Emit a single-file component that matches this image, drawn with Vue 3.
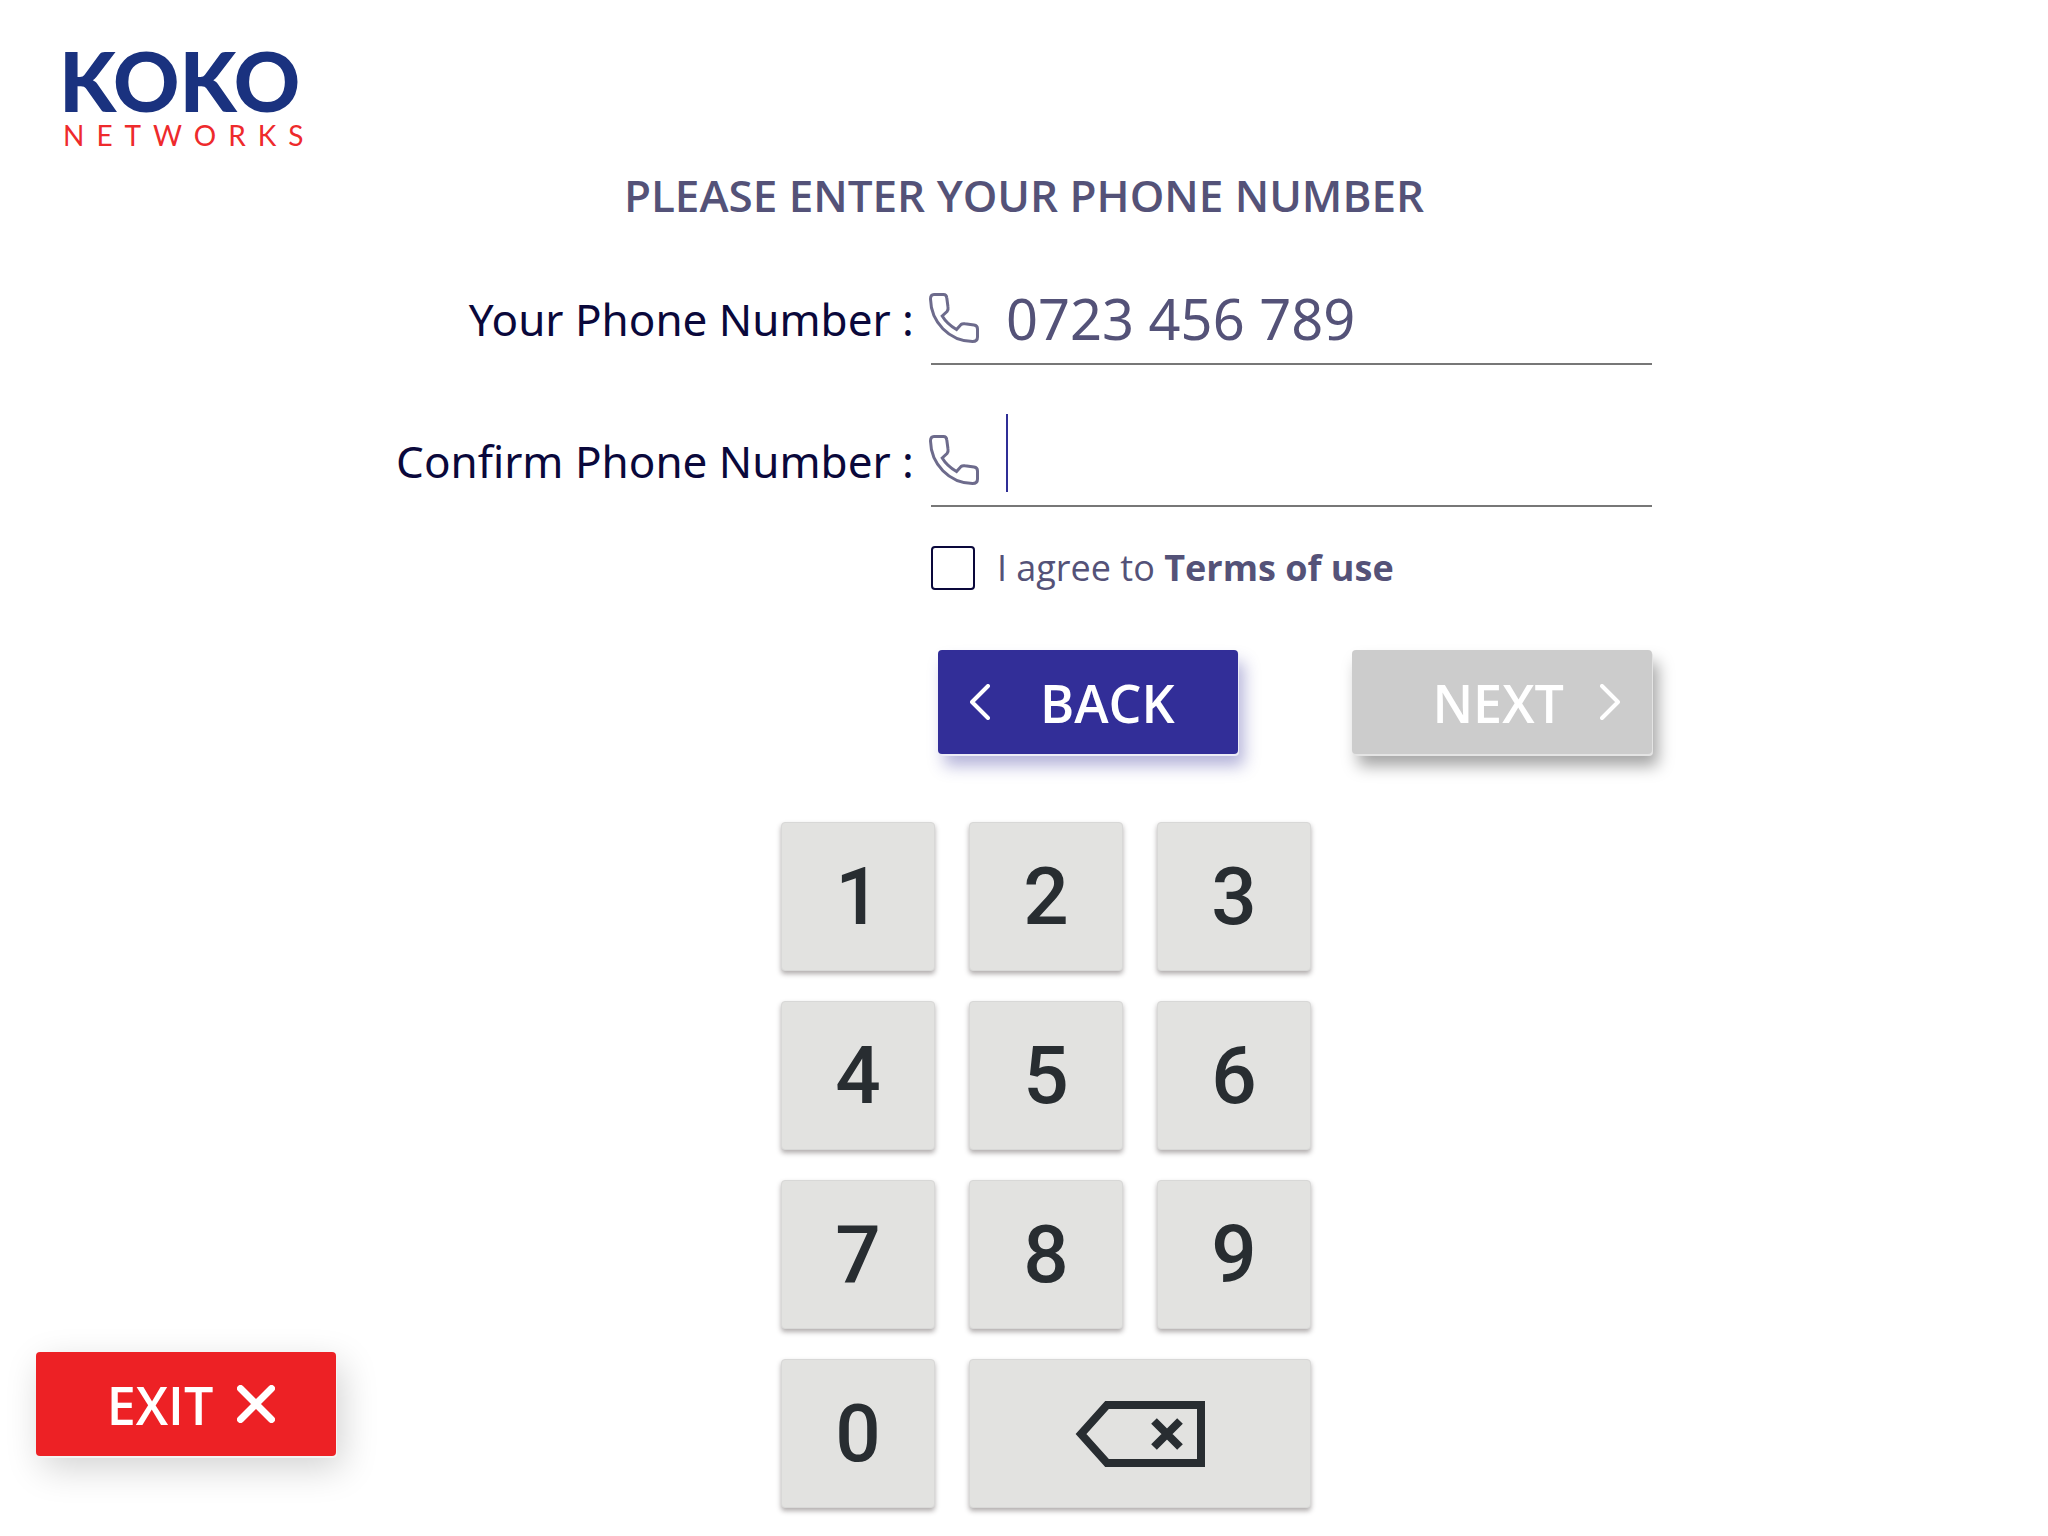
<script setup>
import { ref } from 'vue'

const phone = ref('0723 456 789')
const confirmPhone = ref('')
const agreed = ref(false)
const digits = ['1', '2', '3', '4', '5', '6', '7', '8', '9', '0']

function press(digit) {
  confirmPhone.value += digit
}

function erase() {
  confirmPhone.value = confirmPhone.value.slice(0, -1)
}
</script>

<template>
  <div class="page">
    <header class="brand">
      <span class="brand-name">KOKO</span>
      <span class="brand-sub">NETWORKS</span>
    </header>

    <main class="content">
      <h1 class="title">PLEASE ENTER YOUR PHONE NUMBER</h1>

      <form class="form" @submit.prevent>
        <label class="label" for="phone">Your Phone Number :</label>
        <div class="field">
          <svg class="phone-icon" viewBox="0 0 50 50" aria-hidden="true">
            <path d="M5 1.5H14.5Q17.500 1.500 17.800 5L19 14Q19.500 16.500 18 18.500L13.200 23Q18 31 27.500 36.500L32 31.500Q33.500 30.300 36 30.800L45 32Q48.500 32.500 48.500 36V44Q48.500 48.500 43.500 48.500C20 48 2 29 1.500 6Q1.500 1.500 5 1.500Z" />
          </svg>
          <input id="phone" v-model="phone" class="input" type="tel" />
        </div>

        <label class="label" for="confirm">Confirm Phone Number :</label>
        <div class="field">
          <svg class="phone-icon" viewBox="0 0 50 50" aria-hidden="true">
            <path d="M5 1.5H14.5Q17.500 1.500 17.800 5L19 14Q19.500 16.500 18 18.500L13.200 23Q18 31 27.500 36.500L32 31.500Q33.500 30.300 36 30.800L45 32Q48.500 32.500 48.500 36V44Q48.500 48.500 43.500 48.500C20 48 2 29 1.500 6Q1.500 1.500 5 1.500Z" />
          </svg>
          <input id="confirm" v-model="confirmPhone" class="input" type="tel" />
          <span v-if="!confirmPhone" class="caret"></span>
        </div>

        <div class="agree">
          <input id="agree" v-model="agreed" class="check" type="checkbox" />
          <label for="agree">I agree to <a class="terms" href="#terms">Terms of use</a></label>
        </div>

        <div class="actions">
          <button class="btn back" type="button">
            <svg class="chevron" viewBox="0 0 20 36" aria-hidden="true"><path d="M18 2L2 18L18 34" /></svg>
            <span>BACK</span>
          </button>
          <button class="btn next" type="submit" :disabled="!agreed">
            <span>NEXT</span>
            <svg class="chevron" viewBox="0 0 20 36" aria-hidden="true"><path d="M2 2L18 18L2 34" /></svg>
          </button>
        </div>
      </form>
    </main>

    <section class="bottom">
      <button class="btn exit" type="button">
        <span>EXIT</span>
        <svg class="cross" viewBox="0 0 38 38" aria-hidden="true"><path d="M3.5 3.5L34.5 34.5M34.5 3.5L3.5 34.5" /></svg>
      </button>
      <div class="keypad">
        <button v-for="digit in digits" :key="digit" class="key" type="button" @click="press(digit)">{{ digit }}</button>
        <button class="key wide" type="button" aria-label="Backspace" @click="erase">
          <svg class="erase" viewBox="0 0 130 68" aria-hidden="true">
            <path d="M32 5H126V63H32L6 34Z" />
            <path d="M79 21L105 47M105 21L79 47" />
          </svg>
        </button>
      </div>
    </section>
  </div>
</template>

<style>
body {
  background: #fff;
}
</style>

<style scoped>
.page {
  display: flex;
  flex-direction: column;
  min-height: 100vh;
  box-sizing: border-box;
  padding: 46px 0 28px;
  font-family: "Open Sans", sans-serif;
}

.brand {
  display: flex;
  flex-direction: column;
  align-self: flex-start;
  margin-left: 59px;
  font-family: Lato, sans-serif;
}

.brand-name {
  color: #1a327f;
  font-size: 82px;
  font-weight: 900;
  line-height: 68px;
}

.brand-sub {
  padding-left: 4px;
  color: #ee2a2c;
  font-size: 28px;
  letter-spacing: 12px;
  line-height: 43px;
}

.content {
  display: flex;
  flex-direction: column;
  align-items: center;
}

.title {
  margin: 10px 0 0;
  color: #545278;
  font-size: 44px;
  font-weight: 600;
  line-height: 56px;
}

.form {
  display: grid;
  grid-template-columns: auto 721px;
  column-gap: 17px;
}

.label {
  align-self: end;
  padding-bottom: 14px;
  color: #0a083b;
  font-family: "Noto Sans", sans-serif;
  font-size: 44px;
  line-height: 64px;
  text-align: right;
}

.field {
  position: relative;
  display: flex;
  align-items: center;
  height: 96px;
  margin-top: 44px;
  border-bottom: 2px solid #777;
}

.phone-icon {
  flex: none;
  width: 50px;
  height: 50px;
  margin: 6px 27px 0 -2px;
  fill: none;
  stroke: #6d6b8c;
  stroke-width: 3;
}

.input {
  flex: 1;
  min-width: 0;
  height: 80px;
  padding: 6px 0 0;
  border: 0;
  outline: 0;
  background: transparent;
  color: #545278;
  font-family: "Noto Sans", sans-serif;
  font-size: 56px;
}

.caret {
  position: absolute;
  bottom: 13px;
  left: 75px;
  width: 2px;
  height: 78px;
  background: #2f2e96;
}

.agree {
  display: flex;
  grid-column: 2;
  align-items: center;
  gap: 22px;
  margin-top: 31px;
  color: #545278;
  font-size: 36px;
  line-height: 60px;
}

.check {
  flex: none;
  width: 44px;
  height: 44px;
  margin: 0;
  appearance: none;
  border: 2px solid #0a083b;
  border-radius: 4px;
  background: #fff;
}

.check:checked {
  background: #322e98;
}

.terms {
  color: inherit;
  font-weight: 700;
  text-decoration: none;
}

.actions {
  display: flex;
  grid-column: 2;
  justify-content: space-between;
  margin: 52px 0 0 7px;
}

.btn {
  display: flex;
  align-items: center;
  box-sizing: border-box;
  width: 300px;
  height: 104px;
  padding: 0 32px;
  border: 0;
  border-radius: 4px;
  color: #fff;
  font-family: "Open Sans", sans-serif;
  font-size: 52px;
  font-weight: 600;
}

.back {
  gap: 50px;
  background: #322e98;
  box-shadow: 1px 2px 0 #ececf6, 6px 12px 16px rgba(50, 46, 152, 0.36);
}

.next {
  justify-content: flex-end;
  gap: 36px;
  background: #ccc;
  box-shadow: 1px 2px 0 #e4e4e4, 6px 12px 16px rgba(0, 0, 0, 0.36);
}

.exit {
  align-self: end;
  justify-content: center;
  gap: 24px;
  margin: 0 0 52px 36px;
  padding: 0 32px 0 42px;
  background: #ed2125;
  box-shadow: 1px 2px 0 #f4f4f4, 6px 12px 36px rgba(0, 0, 0, 0.18);
}

.chevron,
.cross,
.erase {
  flex: none;
  fill: none;
  stroke: #fff;
  stroke-linecap: round;
  stroke-linejoin: round;
}

.chevron {
  width: 20px;
  height: 36px;
  stroke-width: 4;
}

.cross {
  width: 38px;
  height: 38px;
  stroke-width: 7;
}

.bottom {
  display: grid;
  grid-template-columns: 1fr auto 1fr;
  margin-top: 68px;
}

.keypad {
  display: grid;
  grid-template-columns: repeat(3, 154px);
  gap: 30px 34px;
  margin-left: 44px;
}

.key {
  display: flex;
  align-items: center;
  justify-content: center;
  height: 149px;
  padding: 0;
  border: 1px solid #d8d8d7;
  border-radius: 4px;
  background: #e2e2e0;
  box-shadow: 0 3px 5px rgba(60, 50, 50, 0.4);
  color: #282d31;
  font-family: Roboto, sans-serif;
  font-size: 80px;
  font-weight: 500;
}

.wide {
  grid-column: span 2;
}

.erase {
  width: 130px;
  height: 68px;
  stroke: #282d31;
  stroke-linecap: butt;
  stroke-linejoin: miter;
  stroke-width: 8;
}
</style>
